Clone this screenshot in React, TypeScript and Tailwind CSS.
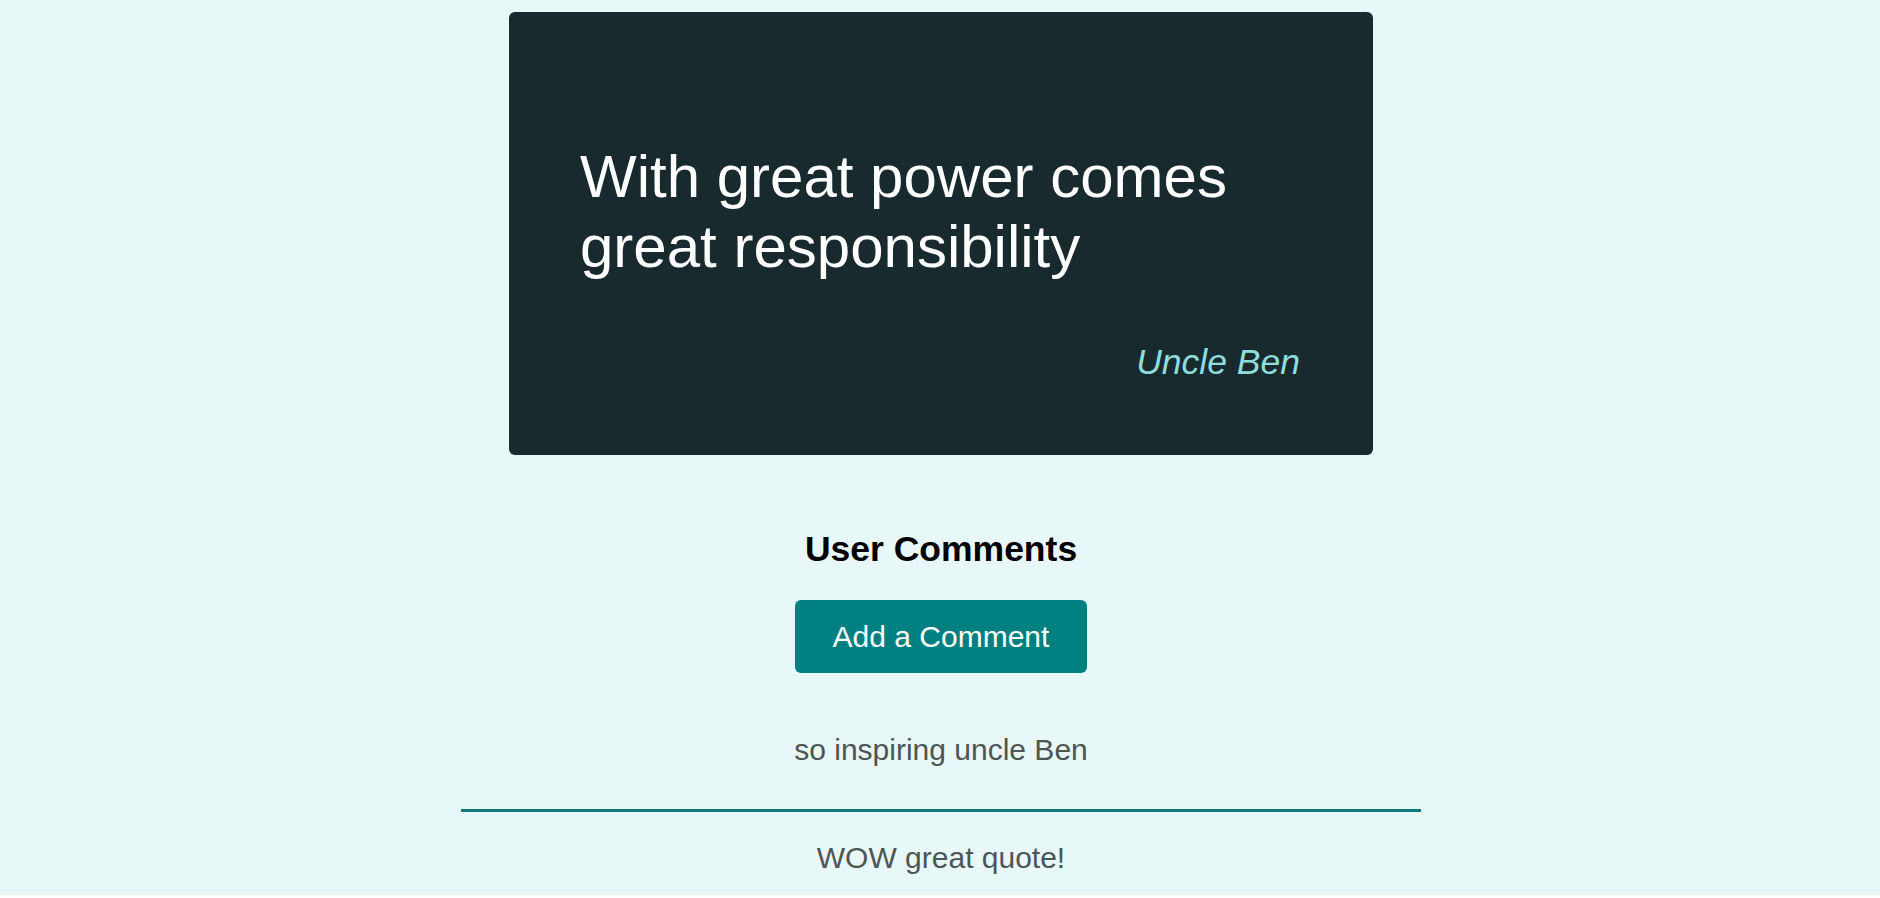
export default function App() {
  const comments = ["so inspiring uncle Ben", "WOW great quote!"];

  return (
    <div className="bg-[#e8f7f7] pt-[12px] pb-[20px] pl-[2px] font-['Liberation_Sans',Arial,sans-serif]">
      <div className="w-[864px] h-[443px] mx-auto rounded-md bg-[#182a2d] pt-[130px] pl-[71px] pr-[73px]">
        <p className="text-[60px] leading-[70px] text-white">
          With great power comes great responsibility
        </p>
        <p className="mt-[60px] text-right text-[35.5px] leading-[40px] italic text-[#8fdcdc]">
          Uncle Ben
        </p>
      </div>

      <h2 className="mt-[74px] text-center text-[35.5px] leading-[40px] font-bold text-black">
        User Comments
      </h2>

      <div className="mt-[31px] flex justify-center">
        <button className="h-[73px] px-[38px] rounded-md bg-[#008080] text-white text-[30px] leading-[34px]">
          Add a Comment
        </button>
      </div>

      <div className="mt-[60px] w-[960px] mx-auto">
        {comments.map((c, i) => (
          <div
            key={c}
            className={
              i === 0
                ? "pb-[42px] border-b-[3px] border-[#0f7a7a]"
                : "pt-[29px]"
            }
          >
            <p className="text-center text-[30px] leading-[34px] text-[#4d5555]">{c}</p>
          </div>
        ))}
      </div>
    </div>
  );
}
